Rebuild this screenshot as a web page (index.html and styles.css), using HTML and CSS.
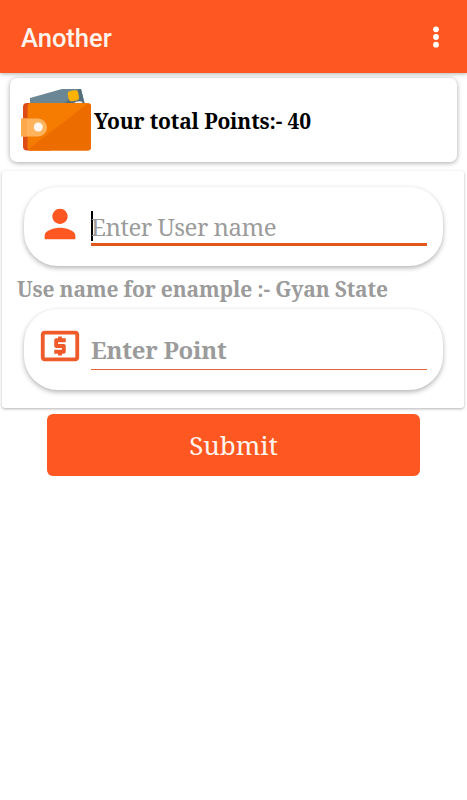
FILE: index.html
```html
<!DOCTYPE html>
<html lang="en">
<head>
    <meta charset="UTF-8">
    <meta name="viewport" content="width=device-width, initial-scale=1.0">
    <title>Another</title>
    <link rel="stylesheet" href="styles.css">
</head>
<body>

    <!-- Top bar -->
    <header class="app-bar">
        <h1>Another</h1>
        <svg class="menu-icon" viewBox="0 0 6 24" width="6" height="24">
            <circle cx="3" cy="3.300" r="2.900"/>
            <circle cx="3" cy="11" r="2.900"/>
            <circle cx="3" cy="18.700" r="2.900"/>
        </svg>
    </header>

    <!-- Points card -->
    <section class="points-card">
        <svg class="wallet" viewBox="0 0 70 62" width="70" height="62">
            <path d="M9 16V9L41 0h19l4 16z" fill="#6b8694"/>
            <path d="M42 16L58 0h2l4 16z" fill="#546e7a"/>
            <rect x="47" y="1.500" width="10.500" height="10.500" rx="3" fill="#ffb300" transform="rotate(-10 52 6)"/>
            <path d="M53 14q2-2.500 8-1.500l.5 2H53z" fill="#eceff1"/>
            <rect x="2" y="14" width="30" height="47.500" rx="4" fill="#dd4b16"/>
            <rect x="6.500" y="14" width="63.500" height="47.500" rx="3.500" fill="#f57c00"/>
            <path d="M70 17v41q0 3.500-3.500 3.500H9q-1.500 0-2-1L67 14.500q3 0 3 2.500z" fill="#ec6c00"/>
            <path d="M1 29.500h16a9 9 0 0 1 0 18H1q-1 0-1-1v-16q0-1 1-1z" fill="#ffb35c"/>
            <path d="M0 30.500q0-1 1-1h5v18H1q-1 0-1-1z" fill="#ffa94d"/>
            <circle cx="17.300" cy="38" r="4.500" fill="#fff7ef"/>
        </svg>
        <p>Your total Points:- 40</p>
    </section>

    <!-- Transfer form -->
    <main class="panel">
        <div class="field">
            <svg class="field-icon" viewBox="0 0 24 24" width="46" height="46">
                <path d="M12 12c2.210 0 4-1.790 4-4s-1.790-4-4-4-4 1.790-4 4 1.790 4 4 4zm0 2c-2.670 0-8 1.340-8 4v2h16v-2c0-2.660-5.330-4-8-4z"/>
            </svg>
            <div class="input active"><span class="caret"></span><span class="name-hint">Enter User name</span></div>
        </div>
        <p class="note">Use name for enample :- Gyan State</p>
        <div class="field field-point">
            <svg class="field-icon" viewBox="0 0 24 24" width="46" height="46">
                <path d="M11 17h2v-1h1c.55 0 1-.45 1-1v-3c0-.55-.45-1-1-1h-3v-1h4V8h-2V7h-2v1h-1c-.55 0-1 .45-1 1v3c0 .55.45 1 1 1h3v1H9v2h2v1zm9-13H4c-1.110 0-1.990.89-1.990 2L2 18c0 1.110.89 2 2 2h16c1.110 0 2-.89 2-2V6c0-1.110-.89-2-2-2zm0 14H4V6h16v12z"/>
            </svg>
            <div class="input"><span class="point-hint">Enter Point</span></div>
        </div>
    </main>

    <button class="submit">Submit</button>

</body>
</html>
```
FILE: styles.css
```css
* { box-sizing: border-box; }

body {
    margin: 0;
    background-color: #fff;
    font-family: "Noto Serif", "Droid Serif", "DejaVu Serif Condensed", "DejaVu Serif", serif;
}

h1, p { margin: 0; white-space: nowrap; }

/* Top bar */
.app-bar {
    display: flex;
    align-items: center;
    justify-content: space-between;
    height: 73px;
    padding: 3px 28px 0 21px;
    background-color: #ff5722;
    box-shadow: 0 1px 4px rgba(0, 0, 0, 0.3);
}

.app-bar h1 {
    color: #fff4ec;
    font-family: Roboto, sans-serif;
    font-size: 25.500px;
    font-weight: 500;
}

.menu-icon { fill: #fff; }

/* Points card */
.points-card {
    display: flex;
    align-items: center;
    height: 84px;
    margin: 5px 10px 8px;
    padding-left: 11px;
    border-radius: 7px;
    background-color: #fff;
    box-shadow: 0 1px 5px rgba(0, 0, 0, 0.35);
}

.points-card p {
    margin-left: 3px;
    padding-top: 2px;
    color: #000;
    font-size: 21px;
    font-weight: bold;
    letter-spacing: -0.150px;
}

/* Form */
.panel {
    height: 237px;
    margin: 1px 3px 0 2px;
    padding: 16px 21px 0 22px;
    border-radius: 3px;
    background-color: #fff;
    box-shadow: 0 1px 3px rgba(0, 0, 0, 0.3);
}

.points-card + .panel { margin-top: 9px; }

.field {
    display: flex;
    height: 79px;
    padding: 14px 16px 0 13px;
    border-radius: 34px;
    background-color: #fff;
    box-shadow: 0 2px 5px rgba(0, 0, 0, 0.3);
}

.field-point { height: 81px; }

.field-icon {
    flex: none;
    margin-right: 8px;
    fill: #ff5722;
}

.field-point .field-icon { fill: #ee5a2a; }

.input {
    display: flex;
    align-items: center;
    flex: 1;
    height: 47px;
    padding-top: 6px;
    border-bottom: 1px solid #e0673c;
    color: #9b9b9b;
    font-size: 24px;
    font-weight: bold;
    letter-spacing: -0.250px;
    white-space: nowrap;
}

.active {
    height: 45px;
    padding-top: 8px;
    border-bottom: 3px solid #e2561b;
    font-weight: normal;
    letter-spacing: -0.470px;
}

.caret {
    width: 2px;
    height: 30px;
    margin-right: -2px;
    background-color: #000;
}

.note {
    height: 43px;
    margin-left: -7px;
    color: #9b9b9b;
    font-size: 21px;
    font-weight: bold;
    letter-spacing: -0.160px;
    line-height: 46px;
}

/* Submit button */
.submit {
    display: block;
    width: 373px;
    height: 62px;
    margin: 6px 0 0 47px;
    padding: 0;
    border: none;
    border-radius: 6px;
    background-color: #ff5722;
    color: #fff4ec;
    font-family: inherit;
    font-size: 26px;
}
```
